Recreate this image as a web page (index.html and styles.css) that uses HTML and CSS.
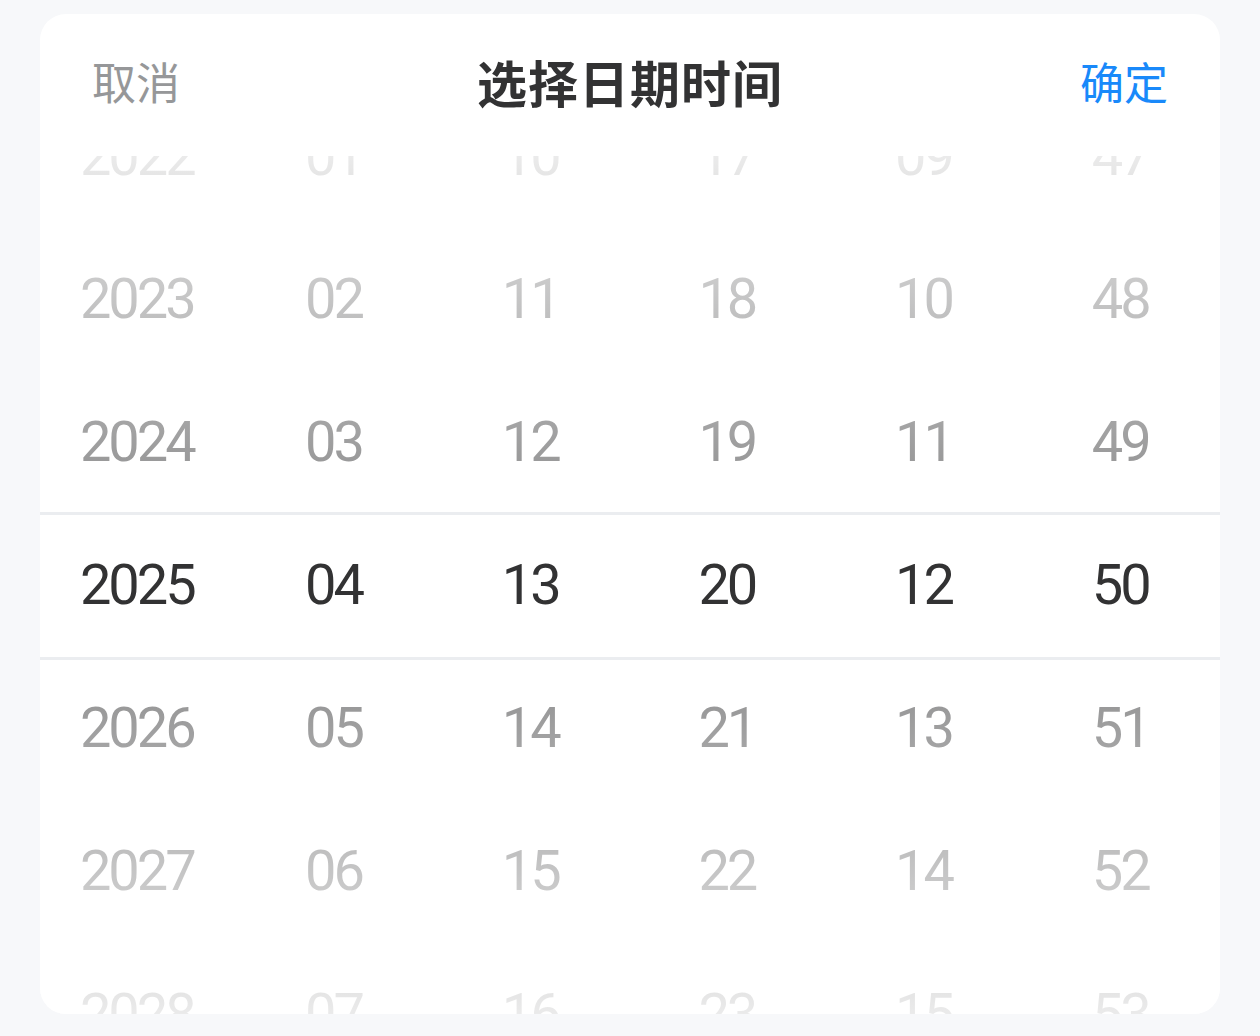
FILE: index.html
```html
<!DOCTYPE html>
<html lang="zh-CN">
<head>
    <meta name="viewport" content="width=device-width, initial-scale=1.0">
    <link rel="stylesheet" href="styles.css">
    <title>选择日期时间</title>
</head>
<body>

    <div class="picker">
        <div class="toolbar">
            <button type="button" class="action cancel">取消</button>
            <div class="title">选择日期时间</div>
            <button type="button" class="action confirm">确定</button>
        </div>

        <div class="columns">
            <div class="column">
                <div class="option">2022</div>
                <div class="option">2023</div>
                <div class="option">2024</div>
                <div class="option">2025</div>
                <div class="option">2026</div>
                <div class="option">2027</div>
                <div class="option">2028</div>
            </div>
            <div class="column">
                <div class="option">01</div>
                <div class="option">02</div>
                <div class="option">03</div>
                <div class="option">04</div>
                <div class="option">05</div>
                <div class="option">06</div>
                <div class="option">07</div>
            </div>
            <div class="column">
                <div class="option">10</div>
                <div class="option">11</div>
                <div class="option">12</div>
                <div class="option">13</div>
                <div class="option">14</div>
                <div class="option">15</div>
                <div class="option">16</div>
            </div>
            <div class="column">
                <div class="option">17</div>
                <div class="option">18</div>
                <div class="option">19</div>
                <div class="option">20</div>
                <div class="option">21</div>
                <div class="option">22</div>
                <div class="option">23</div>
            </div>
            <div class="column">
                <div class="option">09</div>
                <div class="option">10</div>
                <div class="option">11</div>
                <div class="option">12</div>
                <div class="option">13</div>
                <div class="option">14</div>
                <div class="option">15</div>
            </div>
            <div class="column">
                <div class="option">47</div>
                <div class="option">48</div>
                <div class="option">49</div>
                <div class="option">50</div>
                <div class="option">51</div>
                <div class="option">52</div>
                <div class="option">53</div>
            </div>

            <!-- fade over the options and lines round the selected row -->
            <div class="mask"></div>
            <div class="frame"></div>
        </div>
    </div>

</body>
</html>
```

FILE: styles.css
```css
* {box-sizing: border-box;}

body {
    margin: 0;
    padding: 14px 40px 0 40px;
    background-color: #f7f8fa;
    font-family: "Noto Sans CJK SC", "Noto Sans", sans-serif;
}

/* The white card */
.picker {
    width: 1180px;
    height: 1000px;
    background-color: #ffffff;
    border-radius: 26px;
    overflow: hidden;
}

/* Top bar: cancel / title / confirm */
.toolbar {
    height: 142px;
    display: flex;
    align-items: center;
    justify-content: space-between;
    padding: 0 52px 9px 52px;
}

.action {
    background: none;
    border: none;
    padding: 0;
    margin: 0;
    font-family: "Noto Sans CJK SC", sans-serif;
    font-size: 44px;
    cursor: pointer;
}

.cancel {
    color: #969799;
}

.confirm {
    color: #1989fa;
}

.title {
    font-size: 50px;
    font-weight: 700;
    color: #323233;
    letter-spacing: 1px;
}

/* Wheel columns */
.columns {
    position: relative;
    height: 858px;
    display: flex;
    overflow: hidden;
}

.column {
    flex: 1;
    margin-top: -71.5px;
}

.option {
    height: 143px;
    line-height: 143px;
    text-align: center;
    font-family: Roboto, "Noto Sans", sans-serif;
    font-size: 56px;
    letter-spacing: -3px;
    text-indent: -3px;
    color: #323233;
}

/* White fade, strong at the edges, light next to the selected row */
.mask {
    position: absolute;
    top: 0;
    left: 0;
    right: 0;
    bottom: 0;
    background-image:
        linear-gradient(180deg, rgba(255, 255, 255, 0.9), rgba(255, 255, 255, 0.44)),
        linear-gradient(0deg, rgba(255, 255, 255, 0.9), rgba(255, 255, 255, 0.44));
    background-repeat: no-repeat;
    background-position: top, bottom;
    background-size: 100% 357.5px;
    pointer-events: none;
}

.frame {
    position: absolute;
    top: 356px;
    left: 0;
    right: 0;
    height: 148px;
    border-top: 3px solid #ebedf0;
    border-bottom: 3px solid #ebedf0;
    pointer-events: none;
}
```
